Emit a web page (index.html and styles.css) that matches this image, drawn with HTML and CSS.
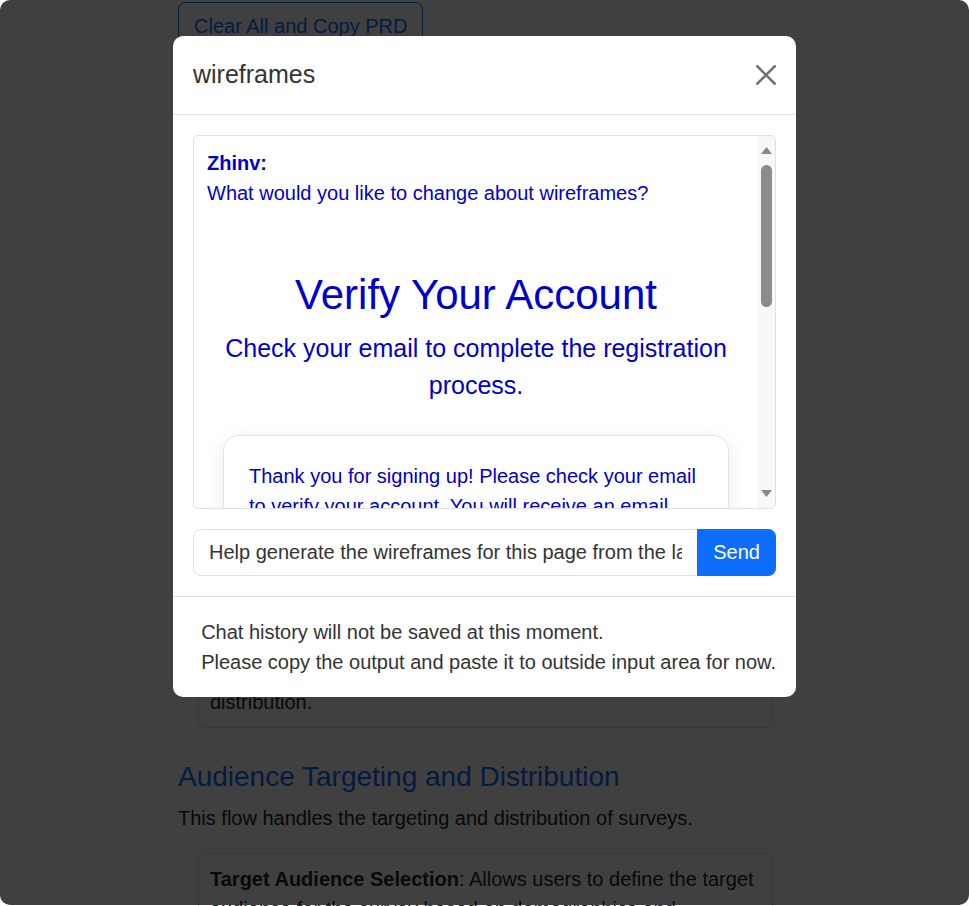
FILE: index.html
```html
<!DOCTYPE html>
<html lang="en">
<head>
    <meta charset="UTF-8">
    <meta name="viewport" content="width=device-width, initial-scale=1.0">
    <title>PRD - wireframes</title>
    <link rel="stylesheet" href="styles.css">
</head>
<body>
    <div class="page">
        <button class="btn btn-outline">Clear All and Copy PRD</button>

        <section class="flow flow-first">
            <h3 class="flow-title">Survey Creation and Scheduling</h3>
            <p>This flow handles the creation and scheduling of surveys.</p>
            <ul class="steps">
                <li class="step"><strong>Survey Builder</strong>: Lets users add questions, choose answer types and reorder items.</li>
                <li class="step"><strong>Templates</strong>: Offers ready made survey layouts for common research goals.</li>
                <li class="step"><strong>Question Logic</strong>: Shows or hides questions based on earlier answers given by the respondent in the survey.</li>
                <li class="step"><strong>Preview</strong>: Lets users check how the survey looks on desktop and mobile.</li>
                <li class="step"><strong>Scheduling</strong>: Enables users to set opening and closing dates for each survey and automate its scheduled reminder and distribution.</li>
            </ul>
        </section>

        <section class="flow">
            <h3 class="flow-title">Audience Targeting and Distribution</h3>
            <p>This flow handles the targeting and distribution of surveys.</p>
            <ul class="steps">
                <li class="step"><strong>Target Audience Selection</strong>: Allows users to define the target audience for the survey based on demographics and interests.</li>
                <li class="step"><strong>Distribution Channels</strong>: Sends the survey by email, link or embedded widget.</li>
            </ul>
        </section>
    </div>

    <div class="backdrop"></div>

    <div class="modal">
        <div class="modal-dialog">
            <div class="modal-content">
                <div class="modal-header">
                    <h5 class="modal-title">wireframes</h5>
                    <button class="btn-close" aria-label="Close">
                        <svg viewBox="0 0 16 16" width="20" height="20"><path d="M.293.293a1 1 0 0 1 1.414 0L8 6.586 14.293.293a1 1 0 1 1 1.414 1.414L9.414 8l6.293 6.293a1 1 0 0 1-1.414 1.414L8 9.414l-6.293 6.293a1 1 0 0 1-1.414-1.414L6.586 8 .293 1.707a1 1 0 0 1 0-1.414z" fill="#000"/></svg>
                    </button>
                </div>

                <div class="modal-body">
                    <div class="chat-box">
                        <div class="chat-scroll">
                            <div class="sender">Zhinv:</div>
                            <div class="message-text">What would you like to change about wireframes?</div>
                            <div class="wireframe">
                                <h1>Verify Your Account</h1>
                                <p class="wf-lead">Check your email to complete the registration process.</p>
                                <div class="wf-card">
                                    <p>Thank you for signing up! Please check your email to verify your account. You will receive an email with a link to confirm your address.</p>
                                </div>
                            </div>
                        </div>
                        <div class="scrollbar">
                            <div class="sb-btn"><svg width="11" height="7" viewBox="0 0 11 7"><path d="M5.5 0 11 7H0z" fill="#8a8a8a"/></svg></div>
                            <div class="sb-thumb"></div>
                            <div class="sb-track"></div>
                            <div class="sb-btn"><svg width="11" height="7" viewBox="0 0 11 7"><path d="M0 0h11L5.5 7z" fill="#8a8a8a"/></svg></div>
                        </div>
                    </div>

                    <div class="input-group">
                        <input class="chat-input" type="text" value="Help generate the wireframes for this page from the latest PRD">
                        <button class="btn btn-primary send-btn">Send</button>
                    </div>
                </div>

                <div class="modal-footer">
                    <div class="footer-note">
                        Chat history will not be saved at this moment.<br>
                        Please copy the output and paste it to outside input area for now.
                    </div>
                </div>
            </div>
        </div>
    </div>
</body>
</html>
```

FILE: styles.css
```css
html {
    font-size: 20px;
}

body {
    margin: 0;
    font-family: "Liberation Sans", Arial, sans-serif;
    font-size: 20px;
    line-height: 1.5;
    color: #212529;
    background: #fff;
}

/* page behind the modal */
.page {
    width: 613px;
    margin: 0 auto;
    padding-top: 2px;
}

.btn {
    font: inherit;
    line-height: 1.5;
    padding: 7.5px 15px;
    border: 1px solid transparent;
    border-radius: 7.5px;
    cursor: pointer;
}

.btn-outline {
    color: #0d6efd;
    border-color: #0d6efd;
    background: transparent;
}

.btn-primary {
    color: #fff;
    background: #0d6efd;
    border-color: #0d6efd;
}

.flow-title {
    font-size: 28px;
    font-weight: normal;
    line-height: 1.2;
    color: #0d6efd;
    margin: 32px 0 10px;
}

.flow-first .flow-title {
    margin-top: 65px;
}

.flow p {
    margin: 0 0 20px;
}

.steps {
    list-style: none;
    margin: 0;
    padding: 0 18px 0 20px;
}

.step {
    background: #fff;
    border: 1px solid #dee2e6;
    border-radius: 7.5px;
    padding: 10px 11px;
    margin-bottom: 20px;
    box-shadow: 0 2px 4px rgba(0, 0, 0, 0.05);
}

.backdrop {
    position: fixed;
    top: 0;
    left: 0;
    right: 0;
    bottom: 1px;
    background: rgba(0, 0, 0, 0.75);
    border-radius: 10px;
}

/* modal */
.modal {
    position: fixed;
    inset: 0;
}

.modal-dialog {
    width: 623px;
    margin: 36px auto;
}

.modal-content {
    background: #fff;
    border-radius: 10px;
    color: #333;
}

.modal-header {
    display: flex;
    align-items: center;
    padding: 20px;
    border-bottom: 1px solid #dee2e6;
}

.modal-title {
    margin: 0;
    font-size: 25px;
    font-weight: normal;
    line-height: 1.5;
}

.btn-close {
    width: 40px;
    height: 40px;
    padding: 10px;
    margin: -10px -10px -10px auto;
    border: 0;
    background: transparent;
    opacity: 0.55;
    cursor: pointer;
}

.btn-close svg {
    display: block;
}

.modal-body {
    padding: 20px;
}

.chat-box {
    display: flex;
    height: 374px;
    box-sizing: border-box;
    border: 1px solid #dee2e6;
    border-radius: 5px;
    overflow: hidden;
}

.chat-scroll {
    flex: 1;
    min-width: 0;
    overflow: hidden;
    padding: 12px 13px;
    color: #0000cd;
}

.sender {
    font-weight: bold;
}

.wireframe {
    padding-top: 62px;
    text-align: center;
}

.wireframe h1 {
    font-size: 42px;
    font-weight: normal;
    line-height: 1.2;
    margin: 0 0 10px;
}

.wf-lead {
    font-size: 25px;
    margin: 0 0 30px;
}

.wf-card {
    width: 506px;
    box-sizing: border-box;
    margin: 0 auto;
    padding: 25px;
    text-align: left;
    background: #fff;
    border: 1px solid #e3e3e3;
    border-radius: 15px;
    box-shadow: 0 4px 20px rgba(0, 0, 0, 0.08);
}

.wf-card p {
    margin: 0;
}

.scrollbar {
    width: 17px;
    background: #f8f8f8;
    display: flex;
    flex-direction: column;
    align-items: center;
}

.sb-btn {
    height: 29px;
    display: flex;
    align-items: center;
    justify-content: center;
}

.sb-btn svg {
    display: block;
}

.sb-thumb {
    width: 11px;
    height: 142px;
    border-radius: 6px;
    background: #8c8c8c;
}

.sb-track {
    flex: 1;
}

.input-group {
    display: flex;
    margin-top: 20px;
}

.chat-input {
    flex: 1;
    min-width: 0;
    font: inherit;
    line-height: 1.5;
    color: #333;
    padding: 7.5px 15px;
    border: 1px solid #dee2e6;
    border-radius: 7.5px 0 0 7.5px;
    outline: none;
}

.send-btn {
    margin-left: -1px;
    border-radius: 0 7.5px 7.5px 0;
}

.modal-footer {
    display: flex;
    justify-content: flex-end;
    padding: 17.5px;
    border-top: 1px solid #dee2e6;
}

.footer-note {
    margin: 2.5px;
}
```
